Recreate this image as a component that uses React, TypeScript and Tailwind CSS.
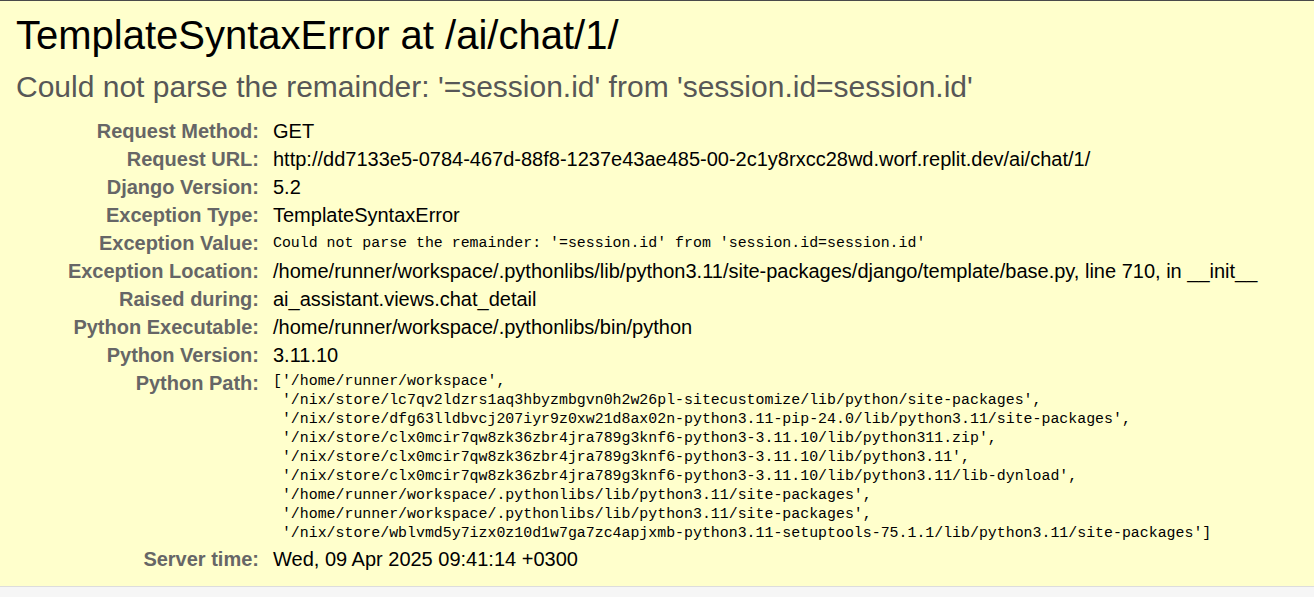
const sans = "font-['Liberation_Sans',Arial,sans-serif]";
const mono = "font-['Liberation_Mono','Courier_New',monospace]";

const meta: { label: string; value: string; code?: boolean }[] = [
  { label: "Request Method:", value: "GET" },
  {
    label: "Request URL:",
    value: "http://dd7133e5-0784-467d-88f8-1237e43ae485-00-2c1y8rxcc28wd.worf.replit.dev/ai/chat/1/",
  },
  { label: "Django Version:", value: "5.2" },
  { label: "Exception Type:", value: "TemplateSyntaxError" },
  {
    label: "Exception Value:",
    value: "Could not parse the remainder: '=session.id' from 'session.id=session.id'",
    code: true,
  },
  {
    label: "Exception Location:",
    value:
      "/home/runner/workspace/.pythonlibs/lib/python3.11/site-packages/django/template/base.py, line 710, in __init__",
  },
  { label: "Raised during:", value: "ai_assistant.views.chat_detail" },
  { label: "Python Executable:", value: "/home/runner/workspace/.pythonlibs/bin/python" },
  { label: "Python Version:", value: "3.11.10" },
];

const pythonPath = [
  "['/home/runner/workspace',",
  " '/nix/store/lc7qv2ldzrs1aq3hbyzmbgvn0h2w26pl-sitecustomize/lib/python/site-packages',",
  " '/nix/store/dfg63lldbvcj207iyr9z0xw21d8ax02n-python3.11-pip-24.0/lib/python3.11/site-packages',",
  " '/nix/store/clx0mcir7qw8zk36zbr4jra789g3knf6-python3-3.11.10/lib/python311.zip',",
  " '/nix/store/clx0mcir7qw8zk36zbr4jra789g3knf6-python3-3.11.10/lib/python3.11',",
  " '/nix/store/clx0mcir7qw8zk36zbr4jra789g3knf6-python3-3.11.10/lib/python3.11/lib-dynload',",
  " '/home/runner/workspace/.pythonlibs/lib/python3.11/site-packages',",
  " '/home/runner/workspace/.pythonlibs/lib/python3.11/site-packages',",
  " '/nix/store/wblvmd5y7izx0z10d1w7ga7zc4apjxmb-python3.11-setuptools-75.1.1/lib/python3.11/site-packages']",
];

function Label({ children }: { children: string }) {
  return (
    <div className="w-[243px] shrink-0 text-right font-bold text-[#666] leading-[28px] whitespace-nowrap">
      {children}
    </div>
  );
}

export default function App() {
  return (
    <div className={`min-h-[597px] bg-[#f6f6f6] text-black ${sans}`}>
      <div className="bg-[#ffc] border-t border-[#4a4a4a] border-b border-b-[#ddd] pt-[10px] pb-[13px] pl-[16px]">
        <h1 className="text-[40px] leading-[48px] font-normal whitespace-nowrap">
          TemplateSyntaxError at /ai/chat/1/
        </h1>
        <div className="mt-[11px] text-[30px] leading-[34px] text-[#575757] whitespace-nowrap">
          Could not parse the remainder: '=session.id' from 'session.id=session.id'
        </div>

        <div className="mt-[13px] text-[20px]">
          {meta.map((row) => (
            <div key={row.label} className="flex h-[28px]">
              <Label>{row.label}</Label>
              <div
                className={
                  row.code
                    ? `pl-[14px] whitespace-pre leading-[28px] text-[14.9px] ${mono}`
                    : "pl-[14px] whitespace-nowrap leading-[28px]"
                }
              >
                {row.value}
              </div>
            </div>
          ))}

          <div className="flex">
            <Label>Python Path:</Label>
            <pre className={`pl-[14px] pt-[3px] pb-[2px] text-[14.9px] leading-[19px] ${mono}`}>
              {pythonPath.join("\n")}
            </pre>
          </div>

          <div className="flex h-[28px]">
            <Label>Server time:</Label>
            <div className="pl-[14px] whitespace-nowrap leading-[28px]">Wed, 09 Apr 2025 09:41:14 +0300</div>
          </div>
        </div>
      </div>
    </div>
  );
}
